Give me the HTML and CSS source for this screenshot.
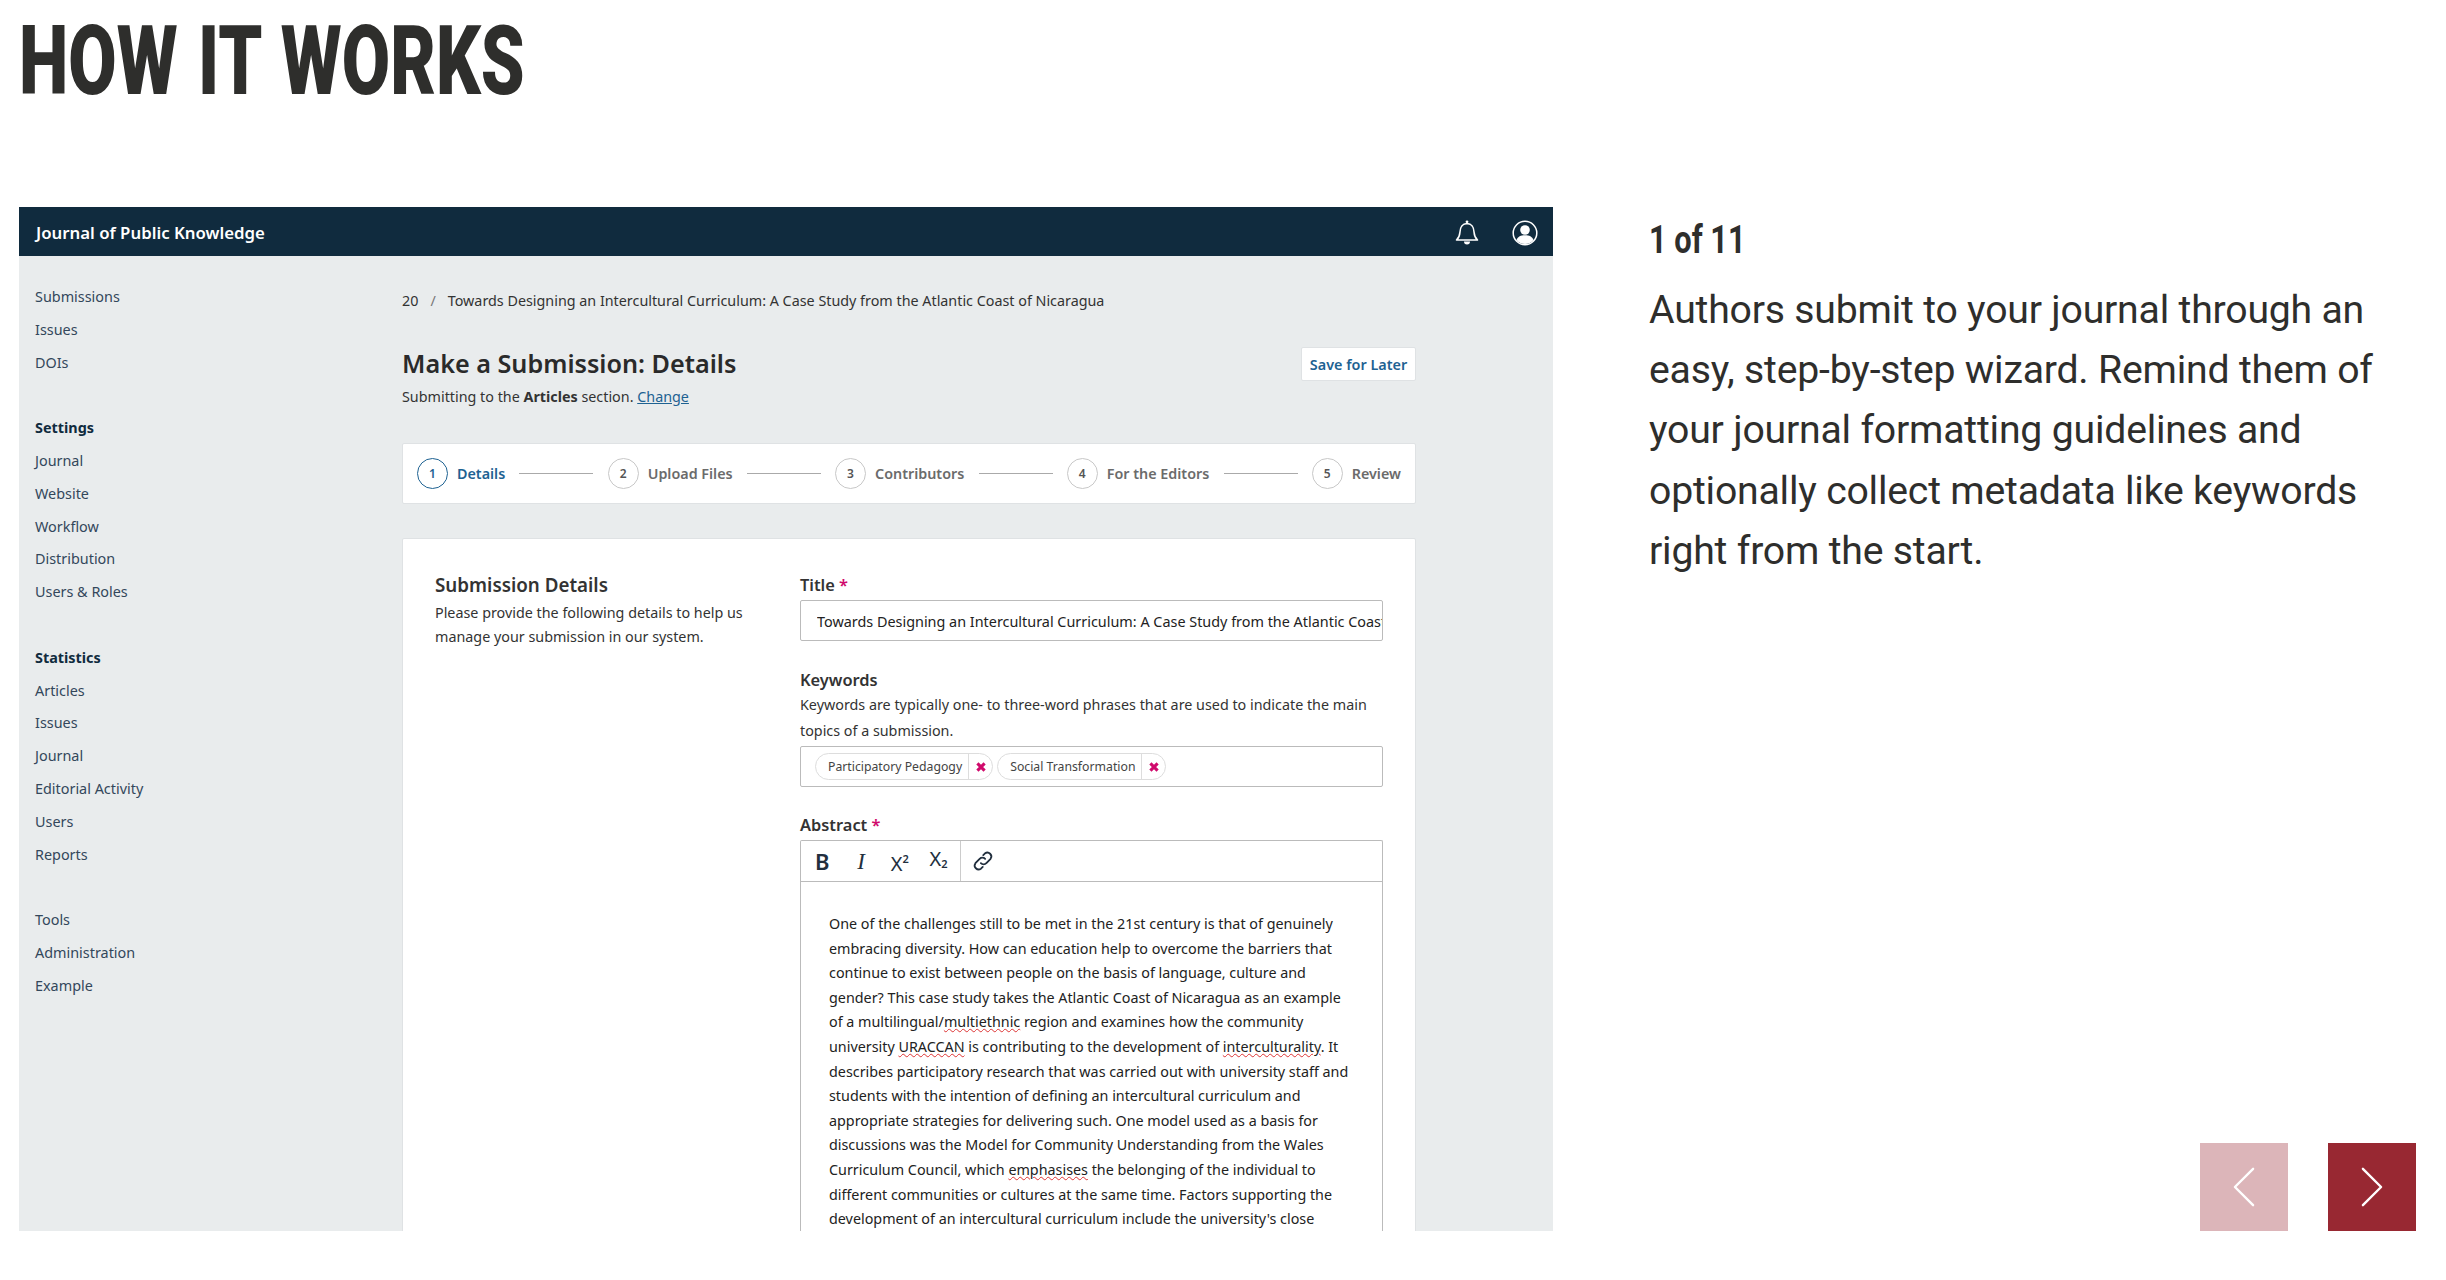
FILE: index.html
```html
<!DOCTYPE html>
<html lang="en">
<head>
  <meta charset="UTF-8" />
  <title>How It Works</title>
  <link rel="stylesheet" href="styles.css">
</head>
<body>
  <h1 class="page-title">How it works</h1>

  <div class="slide">
    <div class="shot">
      <header class="shot-header">
        <span class="journal-name">Journal of Public Knowledge</span>
        <svg class="icon-bell" viewBox="0 0 24 26" fill="none" stroke="#fff" stroke-width="1.6" stroke-linejoin="round">
          <path d="M1.5 21c2.4-2.2 3.2-4 3.4-7.5.2-4.300 1-8.500 7.100-9 6.100.5 6.900 4.700 7.100 9 .2 3.500 1 5.300 3.400 7.500z"/>
          <circle cx="12" cy="2.800" r="1.400" fill="#fff" stroke="none"/>
          <path d="M9 22.500a3 3 0 0 0 6 0z" fill="#fff" stroke="none"/>
        </svg>
        <svg class="icon-user" viewBox="0 0 26 26">
          <circle cx="13" cy="13" r="11.800" fill="none" stroke="#fff" stroke-width="1.500"/>
          <circle cx="13" cy="10" r="4.800" fill="#fff"/>
          <path d="M4.500 20c1.500-3.500 4-4.800 8.500-4.800s7 1.300 8.500 4.800a11 11 0 0 1-17 0z" fill="#fff"/>
        </svg>
      </header>

      <div class="shot-body">
        <nav class="sidebar">
          <ul class="nav-group">
            <li>Submissions</li>
            <li>Issues</li>
            <li>DOIs</li>
          </ul>
          <ul class="nav-group">
            <li class="nav-head">Settings</li>
            <li>Journal</li>
            <li>Website</li>
            <li>Workflow</li>
            <li>Distribution</li>
            <li>Users &amp; Roles</li>
          </ul>
          <ul class="nav-group">
            <li class="nav-head">Statistics</li>
            <li>Articles</li>
            <li>Issues</li>
            <li>Journal</li>
            <li>Editorial Activity</li>
            <li>Users</li>
            <li>Reports</li>
          </ul>
          <ul class="nav-group">
            <li>Tools</li>
            <li>Administration</li>
            <li>Example</li>
          </ul>
        </nav>

        <main class="main">
          <div class="breadcrumb">
            <span>20</span>
            <span class="crumb-sep">/</span>
            <span>Towards Designing an Intercultural Curriculum: A Case Study from the Atlantic Coast of Nicaragua</span>
          </div>

          <div class="title-row">
            <div>
              <h2 class="sub-title">Make a Submission: Details</h2>
              <p class="sub-note">Submitting to the <b>Articles</b> section. <a href="#">Change</a></p>
            </div>
            <button class="save-btn" type="button">Save for Later</button>
          </div>

          <ol class="steps">
            <li class="step current"><span class="step-num">1</span>Details</li>
            <li class="step-line"></li>
            <li class="step"><span class="step-num">2</span>Upload Files</li>
            <li class="step-line"></li>
            <li class="step"><span class="step-num">3</span>Contributors</li>
            <li class="step-line"></li>
            <li class="step"><span class="step-num">4</span>For the Editors</li>
            <li class="step-line"></li>
            <li class="step"><span class="step-num">5</span>Review</li>
          </ol>

          <section class="form-card">
            <div class="form-intro">
              <h3>Submission Details</h3>
              <p>Please provide the following details to help us manage your submission in our system.</p>
            </div>

            <div class="form-fields">
              <div class="field">
                <label for="title">Title <span class="req">*</span></label>
                <input id="title" type="text" value="Towards Designing an Intercultural Curriculum: A Case Study from the Atlantic Coast of Nicaragua" />
              </div>

              <div class="field field-tags">
                <label>Keywords</label>
                <p class="field-help">Keywords are typically one- to three-word phrases that are used to indicate the main topics of a submission.</p>
                <div class="tag-box">
                  <span class="tag">
                    <span class="tag-text">Participatory Pedagogy</span>
                    <span class="tag-x"><svg viewBox="0 0 10 10"><path d="M2 2l6 6M8 2l-6 6"/></svg></span>
                  </span>
                  <span class="tag">
                    <span class="tag-text">Social Transformation</span>
                    <span class="tag-x"><svg viewBox="0 0 10 10"><path d="M2 2l6 6M8 2l-6 6"/></svg></span>
                  </span>
                </div>
              </div>

              <div class="field">
                <label>Abstract <span class="req">*</span></label>
                <div class="editor">
                  <div class="toolbar">
                    <div class="tool-group">
                      <span class="tool tool-b">B</span>
                      <span class="tool tool-i">I</span>
                      <span class="tool tool-sup">X<sup>2</sup></span>
                      <span class="tool tool-sub">X<sub>2</sub></span>
                    </div>
                    <div class="tool-group">
                      <span class="tool">
                        <svg class="icon-link" viewBox="0 0 20 20" fill="none" stroke="#222f3e" stroke-width="1.500" stroke-linecap="round">
                          <path d="M8.200 11.800a3.200 3.200 0 0 0 4.600 0l3.500-3.600a3.300 3.300 0 0 0-4.600-4.600l-1.500 1.500"/>
                          <path d="M11.800 8.200a3.200 3.200 0 0 0-4.600 0l-3.500 3.600a3.300 3.300 0 0 0 4.600 4.600l1.500-1.500"/>
                        </svg>
                      </span>
                    </div>
                  </div>
                  <div class="editor-text">
                    One of the challenges still to be met in the 21st century is that of genuinely embracing diversity. How can education help to overcome the barriers that continue to exist between people on the basis of language, culture and gender? This case study takes the Atlantic Coast of Nicaragua as an example of a multilingual/<span class="misspelt">multiethnic</span> region and examines how the community university <span class="misspelt">URACCAN</span> is contributing to the development of <span class="misspelt">interculturality</span>. It describes participatory research that was carried out with university staff and students with the intention of defining an intercultural curriculum and appropriate strategies for delivering such. One model used as a basis for discussions was the Model for Community Understanding from the Wales Curriculum Council, which <span class="misspelt">emphasises</span> the belonging of the individual to different communities or cultures at the same time. Factors supporting the development of an intercultural curriculum include the university's close
                  </div>
                </div>
              </div>
            </div>
          </section>
        </main>
      </div>
    </div>

    <aside class="caption">
      <div class="counter">1 of 11</div>
      <p class="caption-text">Authors submit to your journal through an easy, step-by-step wizard. Remind them of your journal formatting guidelines and optionally collect metadata like keywords right from the start.</p>
      <div class="slide-nav">
        <button class="arrow arrow-off" type="button">
          <svg viewBox="0 0 24 44"><path d="M22 2L2 22l20 20"/></svg>
        </button>
        <button class="arrow" type="button">
          <svg viewBox="0 0 24 44"><path d="M2 2l20 20L2 42"/></svg>
        </button>
      </div>
    </aside>
  </div>
</body>
</html>
```

FILE: styles.css
```css
:root {
  --ink: #2e2e2c;
  --navy: #102b3e;
  --panel: #e9eced;
  --ojs-blue: #1e6292;
  --line: #c4c7c9;
  --pink: #d00a6c;
  --wine: #982832;
  --wine-light: #dcb5b9;
}

* {
  box-sizing: border-box;
  margin: 0;
  padding: 0;
}

body {
  background: #fff;
  color: var(--ink);
  font-family: 'Noto Sans', sans-serif;
  height: 1280px;
  overflow: hidden;
  padding: 0 30px 0 19px;
}

/* no condensed face installed, so the heavy one is squeezed sideways */
.page-title {
  font-family: 'Roboto', sans-serif;
  font-size: 97px;
  font-weight: 900;
  line-height: 122px;
  height: 207px;
  word-spacing: 4px;
  text-transform: uppercase;
  white-space: nowrap;
  transform: scaleX(0.723);
  transform-origin: 0 0;
}

.slide {
  display: flex;
  height: 1024px;
}

/* the screenshot of the journal app */
.shot {
  width: 1534px;
  flex-shrink: 0;
  height: 100%;
  overflow: hidden;
  background: var(--panel);
  font-size: 14.400px;
}

.shot-header {
  background: var(--navy);
  color: #fff;
  height: 49px;
  display: flex;
  align-items: center;
  padding: 1px 15px 0 17px;
}

.journal-name {
  font-size: 16.800px;
  font-weight: 600;
  margin-right: auto;
}

.icon-bell {
  width: 24px;
  height: 26px;
  margin-right: 33px;
}

.icon-user {
  width: 26px;
  height: 26px;
  margin-top: 1px;
}

.shot-body {
  display: flex;
}

.sidebar {
  width: 383px;
  flex-shrink: 0;
  padding: 25px 0 0 16px;
}

.nav-group {
  list-style: none;
  margin-bottom: 32.800px;
  color: #33475b;
}

.nav-group li {
  height: 32.800px;
  line-height: 32.800px;
}

.nav-group .nav-head {
  font-weight: 700;
  color: #102b3e;
}

.main {
  width: 1014px;
  flex-shrink: 0;
  font-size: 14.330px;
}

.breadcrumb {
  display: flex;
  gap: 12px;
  margin-top: 35px;
  height: 20px;
  line-height: 20px;
  color: #333;
}

.crumb-sep {
  color: #777;
}

.title-row {
  display: flex;
  justify-content: space-between;
  align-items: flex-start;
  margin-top: 26px;
  height: 106px;
}

.sub-title {
  font-size: 25.200px;
  font-weight: 600;
  line-height: 36px;
  color: #2a2a2a;
  margin-top: 8px;
}

.sub-note {
  line-height: 24px;
  margin-top: 4px;
  color: #333;
}

.sub-note a {
  color: var(--ojs-blue);
}

.save-btn {
  width: 115px;
  height: 34px;
  margin-top: 10px;
  background: #fff;
  border: 1px solid #dfe2e4;
  border-radius: 2px;
  color: var(--ojs-blue);
  font-family: inherit;
  font-size: 14.400px;
  font-weight: 600;
}

.steps {
  list-style: none;
  background: #fff;
  height: 61px;
  display: flex;
  align-items: center;
  justify-content: space-between;
  padding: 0 14px;
  border: 1px solid #dfe2e4;
  border-radius: 2px;
}

.step {
  display: flex;
  align-items: center;
  gap: 9px;
  color: #6b6b6b;
  font-weight: 600;
}

.step.current {
  color: var(--ojs-blue);
}

.step-num {
  width: 31px;
  height: 31px;
  border: 1.500px solid #c8c8c8;
  border-radius: 50%;
  display: flex;
  align-items: center;
  justify-content: center;
  font-size: 12px;
  color: #555;
}

.step.current .step-num {
  border-color: var(--ojs-blue);
  color: var(--ojs-blue);
}

.step-line {
  width: 74px;
  height: 1px;
  background: #aaa;
}

.form-card {
  display: flex;
  background: #fff;
  margin-top: 34px;
  border: 1px solid #dfe2e4;
  border-radius: 2px;
  height: 800px;
  padding: 34px 32px 0;
}

.form-intro {
  width: 365px;
  flex-shrink: 0;
  padding-right: 40px;
}

.form-intro h3 {
  font-size: 18.800px;
  font-weight: 600;
  line-height: 24px;
  color: #333;
}

.form-intro p {
  line-height: 24px;
  margin-top: 4px;
  color: #333;
}

.form-fields {
  flex: 1;
}

.field {
  margin-bottom: 27px;
}

.field-tags {
  margin-bottom: 26px;
}

.field label {
  display: block;
  font-size: 16.400px;
  font-weight: 600;
  line-height: 24px;
  color: #333;
}

.req {
  color: var(--pink);
}

.field input {
  display: block;
  width: 100%;
  height: 41px;
  margin-top: 3px;
  padding: 2px 0 0 16px;
  border: 1.500px solid #bbb;
  border-radius: 2px;
  font-family: inherit;
  font-size: 14.400px;
  color: #222;
}

.field-help {
  line-height: 25.500px;
  color: #333;
}

.tag-box {
  display: flex;
  gap: 4px;
  height: 41px;
  margin-top: 3px;
  padding: 6px 14px;
  border: 1.500px solid #bbb;
  border-radius: 2px;
}

.tag {
  display: flex;
  align-items: center;
  height: 27px;
  border: 1px solid #ddd;
  border-radius: 14px;
  font-size: 12.250px;
  color: #444;
}

.tag-text {
  padding: 0 6px 0 12px;
  line-height: 25px;
  border-right: 1px solid #ddd;
}

.tag-x {
  width: 23px;
  display: flex;
  justify-content: center;
}

.tag-x svg {
  width: 12px;
  height: 12px;
  fill: none;
  stroke: var(--pink);
  stroke-width: 2.600;
}

.editor {
  margin-top: 3px;
  border: 1.500px solid #bbb;
  border-bottom: 0;
  border-radius: 2px 2px 0 0;
  overflow: hidden;
}

.toolbar {
  display: flex;
  height: 41px;
  border-bottom: 1.500px solid #bbb;
}

.tool-group {
  display: flex;
  align-items: center;
  padding: 0 2px;
  border-right: 1px solid #ccc;
}

.tool-group:last-child {
  border-right: 0;
  padding: 0 3px;
}

.tool {
  width: 38.700px;
  height: 26px;
  display: flex;
  justify-content: center;
  align-items: center;
  font-size: 20px;
  line-height: 1;
  color: #222f3e;
}

.tool sup,
.tool sub {
  font-size: 11px;
  font-weight: 600;
}

.tool sup {
  align-self: flex-start;
}

.tool sub {
  align-self: flex-end;
}

.tool-sup {
  padding-top: 5px;
}

.tool-sub {
  padding-bottom: 5px;
}

.tool-b {
  font-size: 22px;
  font-weight: 600;
}

.tool-i {
  font-family: 'Liberation Serif', serif;
  font-style: italic;
  font-size: 23px;
}

.icon-link {
  width: 24px;
  height: 24px;
}

.editor-text {
  padding: 30px 28px 0;
  line-height: 24.600px;
  color: #222;
}

.misspelt {
  text-decoration: underline wavy #d33;
  text-decoration-thickness: 1px;
}

/* right hand caption */
.caption {
  flex: 1;
  display: flex;
  flex-direction: column;
  padding-left: 96px;
  font-family: 'Roboto', sans-serif;
  color: var(--ink);
}

.counter {
  font-size: 38px;
  font-weight: 700;
  line-height: 60px;
  margin-top: 3px;
  transform: scaleX(0.81);
  transform-origin: 0 0;
}

.caption-text {
  font-size: 39.200px;
  letter-spacing: -0.200px;
  line-height: 60.200px;
  margin-top: 10px;
}

.slide-nav {
  margin-top: auto;
  display: flex;
  justify-content: flex-end;
  gap: 40px;
}

.arrow {
  width: 88px;
  height: 88px;
  background: var(--wine);
  border: 0;
  display: flex;
  align-items: center;
  justify-content: center;
}

.arrow-off {
  background: var(--wine-light);
}

.arrow svg {
  width: 22px;
  height: 40px;
  fill: none;
  stroke: #fff;
  stroke-width: 2.600;
  stroke-linecap: round;
  stroke-linejoin: round;
}
```
